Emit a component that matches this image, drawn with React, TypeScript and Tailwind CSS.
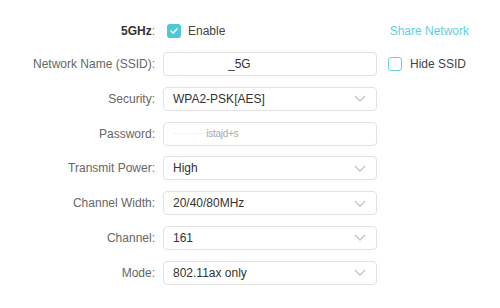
const rows = [
  { label: "Security:", value: "WPA2-PSK[AES]", select: true },
  { label: "Password:", value: "", select: false, password: true },
  { label: "Transmit Power:", value: "High", select: true },
  { label: "Channel Width:", value: "20/40/80MHz", select: true },
  { label: "Channel:", value: "161", select: true },
  { label: "Mode:", value: "802.11ax only", select: true },
];

function Chevron() {
  return (
    <svg width="12" height="7" viewBox="0 0 12 7" className="shrink-0">
      <polyline points="1,1 6,6 11,1" fill="none" stroke="#c4c4c4" strokeWidth="1.3" />
    </svg>
  );
}

function Check() {
  return (
    <svg width="10" height="8" viewBox="0 0 10 8">
      <polyline points="2,4 4.2,6 8,2" fill="none" stroke="#fff" strokeWidth="1.6" strokeLinecap="round" strokeLinejoin="round" />
    </svg>
  );
}

export default function App() {
  return (
    <div
      className="w-[500px] h-[308px] bg-white text-[12px] text-[#666] pt-[19px] overflow-hidden"
      style={{ fontFamily: '"Liberation Sans", Arial, sans-serif' }}
    >
      <div className="flex items-center h-6 mb-[9px]">
        <div className="w-[155px] text-right text-[#333]">
          <span className="font-bold">5GHz</span>
          <span className="text-[#666]">:</span>
        </div>
        <div className="ml-[12px] flex items-center gap-[7px]">
          <span className="w-[14px] h-[14px] rounded-[3px] bg-[#4cc9d5] flex items-center justify-center">
            <Check />
          </span>
          <span className="text-[#444]">Enable</span>
        </div>
        <a className="ml-auto mr-[31px] text-[#62d0db]">Share Network</a>
      </div>

      <div className="flex flex-col gap-[10.8px]">
        <div className="flex items-center h-6">
          <div className="w-[155px] text-right">Network Name (SSID):</div>
          <div className="ml-[8px] w-[214px] h-6 border border-[#e2e2e2] rounded-[4px] flex items-center pl-[64px] text-[#333]">
            _5G
          </div>
          <div className="ml-[11px] flex items-center gap-[8px]">
            <span className="w-[14px] h-[14px] rounded-[3px] border border-[#6bcdd7]" />
            <span className="text-[#444]">Hide SSID</span>
          </div>
        </div>

        {rows.map((r) => (
          <div key={r.label} className="flex items-center h-6">
            <div className="w-[155px] text-right">{r.label}</div>
            <div className="ml-[8px] w-[214px] h-6 border border-[#e2e2e2] rounded-[4px] flex items-center pl-[9px] pr-[10px] text-[#333]">
              {r.password ? (
                <span className="flex-1 text-[10px] leading-none tracking-[-0.3px]">
                  <span className="text-[#e6e6e6]">···········</span>
                  <span className="text-[#aaa]">istajd+s</span>
                </span>
              ) : (
                <span className="flex-1">{r.value}</span>
              )}
              {r.select && <Chevron />}
            </div>
          </div>
        ))}
      </div>
    </div>
  );
}
